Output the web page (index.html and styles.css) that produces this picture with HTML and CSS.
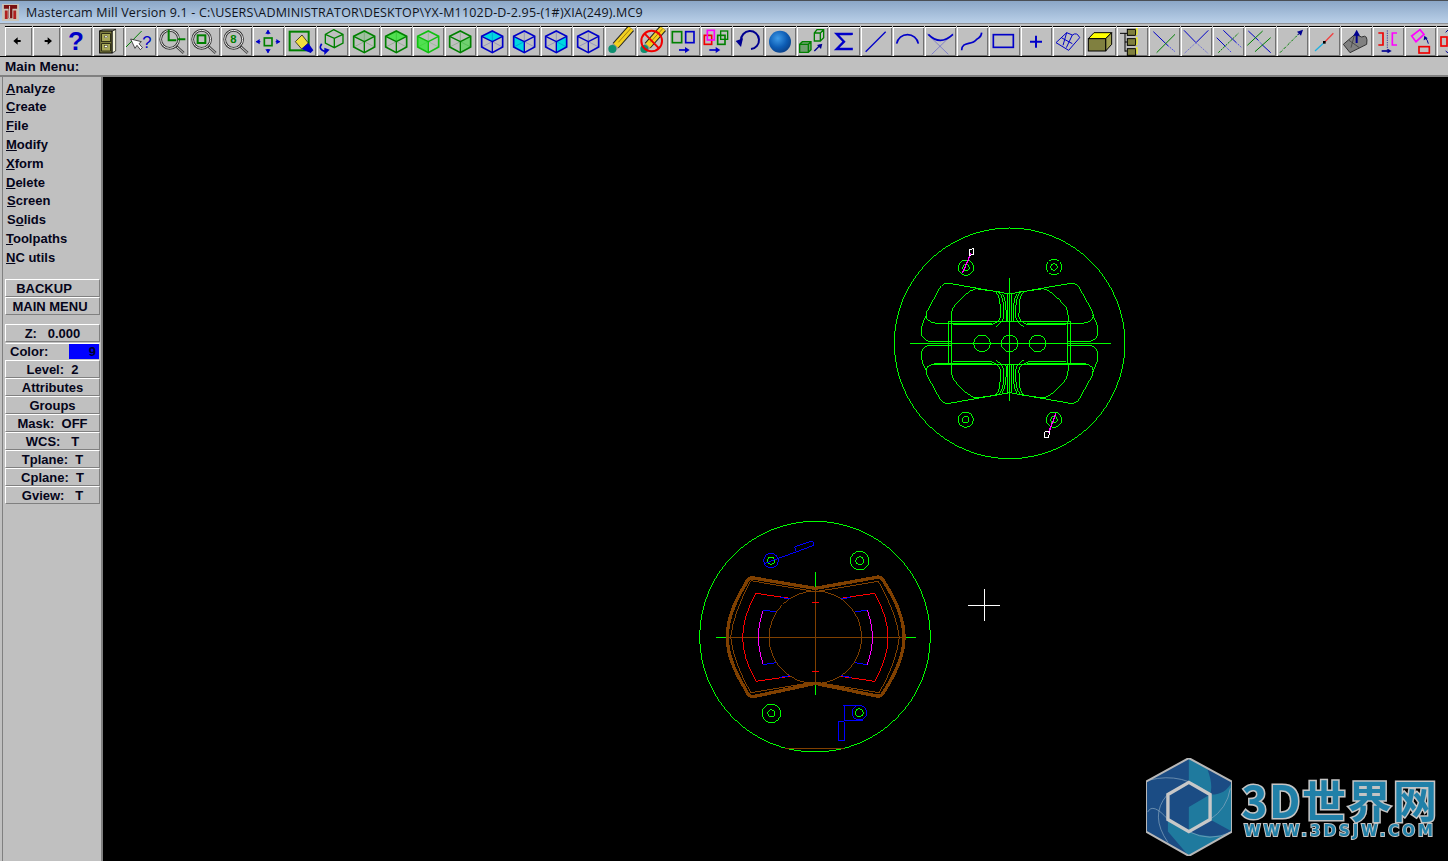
FILE: index.html
```html
<!DOCTYPE html>
<html lang="en">
<head>
<meta charset="utf-8">
<title>Mastercam Mill Version 9.1</title>
<link rel="stylesheet" href="styles.css">
</head>
<body>
<svg class="defs" width="0" height="0" aria-hidden="true">
  <defs>
    <radialGradient id="ball" cx="40%" cy="35%" r="70%"><stop offset="0" stop-color="#3f9be8"/><stop offset=".6" stop-color="#0d5cb4"/><stop offset="1" stop-color="#0a3f86"/></radialGradient>
    <g id="mag"><path d="M58 58L80 78" stroke="#444" stroke-width="8"/><path d="M58 58L80 78" stroke="#ddd" stroke-width="3"/><circle cx="38" cy="37" r="27" fill="none" stroke="#333" stroke-width="8"/><circle cx="38" cy="37" r="27" fill="none" stroke="#e8e8e8" stroke-width="3"/></g>
    <g id="cubeg"><path d="M46 44V77M46 44L14 28M46 44L77 28" fill="none" stroke-width="4"/><path d="M46 12L77 28V60L46 77L14 60V28Z" fill="none" stroke-width="5"/><path d="M46 12V44M14 60L46 44L77 60" fill="none" stroke-width="2" opacity=".35"/></g>
    <g id="pencil"><path d="M32 56L78 4" stroke="#222" stroke-width="24"/><path d="M32 56L78 4" stroke="#f2d020" stroke-width="18"/><path d="M40 46L78 4" stroke="#a08010" stroke-width="3"/><path d="M18 71L32 56" stroke="#999" stroke-width="22"/><circle cx="22" cy="66" r="12" fill="#0d9070"/></g>
    <g id="holeT"><circle r="23" fill="none" stroke-width="3"/><circle r="10" fill="none" stroke-width="3"/></g>
    <g id="quadT" fill="none" stroke="#00ff00" stroke-width="3">
      <path d="M374 222L192 190Q175 188 165 203L125 276Q115 305 155 310H322"/>
      <path d="M345 216L272 206Q245 213 205 262Q195 285 200 316"/>
      <path d="M332 216Q348 225 346 290Q345 304 320 314H205"/>
      <path d="M343 218Q358 232 356 290Q354 306 332 320"/>
      <path d="M352 222Q366 240 363 305"/>
      <path d="M368 222V305"/>
      <path d="M125 285Q105 320 110 345Q118 363 135 364H200"/>
      <path d="M190 305H374M190 305V370M200 316V370"/>
    </g>
    <g id="quadB" fill="none">
      <path d="M300 265L198 250Q158 320 158 382" stroke="#ff0000" stroke-width="3"/>
      <path d="M270 262L300 267" stroke="#0000ff" stroke-width="3"/>
      <path d="M220 300Q205 345 205 382" stroke="#ff00ff" stroke-width="3"/>
      <path d="M220 300L258 306" stroke="#0000ff" stroke-width="3"/>
    </g>
  </defs>
</svg>
<div class="app">
  <header class="titlebar">
    <svg class="app-icon" viewBox="0 0 18 18"><rect width="18" height="18" fill="#c9c4b8"/><path d="M2 1H16V5H11V15H7V5H2Z" fill="#7a1010"/><path d="M6 7H3V16H6ZM12 7H15V16H12Z" fill="#b02020"/><path d="M8 2V15" stroke="#ddd" stroke-width="1"/></svg>
    <span class="title-text">Mastercam Mill Version 9.1 - C:\USERS\ADMINISTRATOR\DESKTOP\YX-M1102D-D-2.95-(1#)XIA(249).MC9</span>
  </header>

  <nav class="toolbar">
    <button class="tool tool-sm"><svg viewBox="0 0 81 87"><path d="M25 42L38 31V39H47V45H38V53Z" fill="#000"/></svg></button>
    <button class="tool tool-sm"><svg viewBox="0 0 81 87"><path d="M57 42L44 31V39H35V45H44V53Z" fill="#000"/></svg></button>
    <button class="tool"><svg viewBox="0 0 93 87"><text class="glyph" x="45" y="68" font-size="78" text-anchor="middle" fill="#0000c8">?</text></svg></button>
    <button class="tool"><svg viewBox="0 0 93 87"><path d="M57 12L68 7V72L57 78Z" fill="#f4f4d8" stroke="#000" stroke-width="2"/><path d="M20 12L32 7H68L57 12Z" fill="#f4f4d8" stroke="#000" stroke-width="2"/><rect x="20" y="12" width="37" height="66" fill="#808040" stroke="#000" stroke-width="3"/><rect x="26" y="20" width="26" height="24" fill="#a8a858" stroke="#000" stroke-width="2"/><rect x="26" y="50" width="26" height="22" fill="#a8a858" stroke="#000" stroke-width="2"/><rect x="35" y="27" width="8" height="5" fill="#fff" stroke="#000"/><rect x="35" y="56" width="8" height="5" fill="#fff" stroke="#000"/></svg></button>
    <button class="tool"><svg viewBox="0 0 93 87"><path d="M3 60L50 12" stroke="#008000" stroke-width="3"/><path d="M17 36L30 64L36 55L46 68L52 62L42 50L49 44Z" fill="#fff" stroke="#000" stroke-width="2"/><text x="66" y="62" font-size="50" font-family="Liberation Sans" text-anchor="middle" fill="#0000c8">?</text></svg></button>
    <button class="tool"><svg viewBox="0 0 93 87"><use href="#mag"/><path d="M35 8V40H58M62 37H85" fill="none" stroke="#008000" stroke-width="6"/></svg></button>
    <button class="tool"><svg viewBox="0 0 93 87"><use href="#mag"/><rect x="26" y="25" width="23" height="23" fill="none" stroke="#008000" stroke-width="6"/></svg></button>
    <button class="tool"><svg viewBox="0 0 93 87"><use href="#mag"/><text class="glyph" x="37" y="49" font-size="34" text-anchor="middle" fill="#008000">8</text></svg></button>
    <button class="tool"><svg viewBox="0 0 93 87"><rect x="34" y="33" width="23" height="23" fill="none" stroke="#008000" stroke-width="5"/><path d="M22 44H10M68 44H80M45 22V10M45 66V77" stroke="#0000c8" stroke-width="4"/><path d="M8 44L20 36V52ZM82 44L70 36V52ZM45 8L37 20H53ZM45 79L37 67H53Z" fill="#0000c8"/></svg></button>
    <button class="tool"><svg viewBox="0 0 93 87"><rect x="14" y="14" width="57" height="56" fill="none" stroke="#008000" stroke-width="6"/><path d="M31 44L51 24L70 48L50 66Z" fill="#f0e040" stroke="#000" stroke-width="2"/><path d="M50 66L70 48L85 70L77 78Z" fill="#0000c8"/></svg></button>
    <button class="tool"><svg viewBox="0 0 93 87"><path d="M50 8L78 22V48L52 62L25 48V22ZM25 22L52 34L78 22M52 34V62" fill="none" stroke="#008000" stroke-width="4"/><path d="M14 50Q2 68 26 74" fill="none" stroke="#0000c8" stroke-width="5"/><path d="M38 68L22 62V84Z" fill="#0000c8"/></svg></button>
    <button class="tool"><svg viewBox="0 0 93 87"><path d="M46 12L77 28L46 44L14 28Z" fill="#80c080" opacity=".5"/><use href="#cubeg" stroke="#008000"/></svg></button>
    <button class="tool"><svg viewBox="0 0 93 87"><path d="M46 12L77 28L46 44L14 28Z" fill="#50e050"/><use href="#cubeg" stroke="#008000"/></svg></button>
    <button class="tool"><svg viewBox="0 0 93 87"><path d="M46 44V77L14 60V28Z" fill="#50e050"/><use href="#cubeg" stroke="#10c010"/></svg></button>
    <button class="tool"><svg viewBox="0 0 93 87"><path d="M46 44V77L77 60V28Z" fill="#70d070"/><use href="#cubeg" stroke="#008000"/></svg></button>
    <button class="tool"><svg viewBox="0 0 93 87"><path d="M46 12L77 28L46 44L14 28Z" fill="#00d8e0"/><use href="#cubeg" stroke="#0000c8"/></svg></button>
    <button class="tool"><svg viewBox="0 0 93 87"><path d="M46 44V77L14 60V28Z" fill="#00d8e0"/><use href="#cubeg" stroke="#0000c8"/></svg></button>
    <button class="tool"><svg viewBox="0 0 93 87"><path d="M46 44V77L77 60V28Z" fill="#00d8e0"/><use href="#cubeg" stroke="#0000c8"/></svg></button>
    <button class="tool"><svg viewBox="0 0 93 87"><use href="#cubeg" stroke="#0000c8"/></svg></button>
    <button class="tool"><svg viewBox="0 0 93 87"><use href="#pencil"/></svg></button>
    <button class="tool"><svg viewBox="0 0 93 87"><use href="#pencil"/><circle cx="44" cy="42" r="31" fill="none" stroke="#f00000" stroke-width="6"/><path d="M23 20L66 64" stroke="#f00000" stroke-width="6"/></svg></button>
    <button class="tool"><svg viewBox="0 0 93 87"><rect x="10" y="14" width="28" height="33" fill="none" stroke="#008000" stroke-width="5"/><rect x="50" y="14" width="25" height="33" fill="none" stroke="#0000c8" stroke-width="5"/><path d="M30 69H50" stroke="#0000c8" stroke-width="5"/><path d="M62 69L48 60V78Z" fill="#0000c8"/></svg></button>
    <button class="tool"><svg viewBox="0 0 93 87"><rect x="10" y="25" width="22" height="27" fill="none" stroke="#f00000" stroke-width="5"/><rect x="19" y="10" width="21" height="29" fill="none" stroke="#ff00ff" stroke-width="5"/><rect x="50" y="25" width="22" height="27" fill="none" stroke="#008000" stroke-width="5"/><rect x="59" y="12" width="21" height="25" fill="none" stroke="#008000" stroke-width="4"/><path d="M25 69H46" stroke="#0000c8" stroke-width="5"/><path d="M58 69L44 60V78Z" fill="#0000c8"/></svg></button>
    <button class="tool"><svg viewBox="0 0 93 87"><path d="M24 40A27 27 0 1 1 54 66" fill="none" stroke="#000090" stroke-width="6"/><path d="M8 42L30 34L24 60Z" fill="#000090"/></svg></button>
    <button class="tool"><svg viewBox="0 0 93 87"><circle cx="45" cy="44" r="33" fill="url(#ball)"/></svg></button>
    <button class="tool"><svg viewBox="0 0 93 87"><path d="M52 18L60 8H80V32L70 42H52ZM52 18H70V42M70 18L80 8" fill="none" stroke="#008000" stroke-width="4"/><path d="M8 52L16 44H42V68L34 76H8ZM8 52H34V76M34 52L42 44" fill="#70a070" stroke="#008000" stroke-width="4"/><path d="M52 72L70 54" stroke="#000090" stroke-width="4"/><path d="M76 50L60 54L72 66Z" fill="#000090"/></svg></button>
    <button class="tool"><svg viewBox="0 0 93 87"><path d="M68 24V21H23L45 44L23 66H68V62" fill="none" stroke="#0000c8" stroke-width="7"/></svg></button>
    <button class="tool"><svg viewBox="0 0 93 87"><path d="M14 74L74 14" stroke="#0000c8" stroke-width="4"/></svg></button>
    <button class="tool"><svg viewBox="0 0 93 87"><path d="M11 50A33 33 0 0 1 76 50" fill="none" stroke="#0000c8" stroke-width="5"/></svg></button>
    <button class="tool"><svg viewBox="0 0 93 87"><path d="M5 19L70 82M85 19L20 82" stroke="#4040d0" stroke-width="1.5"/><path d="M10 22Q45 58 84 22" fill="none" stroke="#0000c8" stroke-width="5"/></svg></button>
    <button class="tool"><svg viewBox="0 0 93 87"><path d="M14 70C14 42 44 56 58 38C66 30 72 34 74 17" fill="none" stroke="#0000c8" stroke-width="5"/></svg></button>
    <button class="tool"><svg viewBox="0 0 93 87"><rect x="13" y="23" width="60" height="38" fill="none" stroke="#0000c8" stroke-width="5"/></svg></button>
    <button class="tool"><svg viewBox="0 0 93 87"><path d="M45 26V62M27 44H63" stroke="#0000c8" stroke-width="6"/></svg></button>
    <button class="tool"><svg viewBox="0 0 93 87"><path d="M9 47L41 17L58 24Q72 14 80 32L47 70ZM25 32L58 50M41 17L30 55M58 24L40 62" fill="none" stroke="#0000c8" stroke-width="3"/></svg></button>
    <button class="tool"><svg viewBox="0 0 93 87"><path d="M10 35L27 17H80L62 35Z" fill="#ffff00" stroke="#000" stroke-width="3"/><path d="M62 35L80 17V52L62 72Z" fill="#a0a050" stroke="#000" stroke-width="3"/><rect x="10" y="35" width="52" height="37" fill="#808040" stroke="#000" stroke-width="3"/></svg></button>
    <button class="tool"><svg viewBox="0 0 93 87"><path d="M9 19H31M24 19V74M24 45H31M24 72H31" stroke="#000" stroke-width="3" fill="none"/><rect x="31" y="7" width="25" height="18" fill="#808040" stroke="#000" stroke-width="3"/><rect x="31" y="35" width="25" height="20" fill="#808040" stroke="#000" stroke-width="3"/><rect x="31" y="65" width="25" height="20" fill="#808040" stroke="#000" stroke-width="3"/><path d="M56 7L60 3V21L56 25M56 35L60 31V51L56 55M56 65L60 61V81" stroke="#ffff00" stroke-width="3" fill="none"/></svg></button>
    <button class="tool"><svg viewBox="0 0 93 87"><path d="M13 14L58 57" stroke="#0000c8" stroke-width="3"/><path d="M58 57L78 74" stroke="#4040f0" stroke-width="3" stroke-dasharray="4 3"/><path d="M23 77L78 22" stroke="#008000" stroke-width="3"/></svg></button>
    <button class="tool"><svg viewBox="0 0 93 87"><path d="M9 10L45 47L82 10" fill="none" stroke="#0000c8" stroke-width="3"/><path d="M45 47L9 80M45 47L82 80" stroke="#6868d8" stroke-width="3" stroke-dasharray="4 3"/></svg></button>
    <button class="tool"><svg viewBox="0 0 93 87"><path d="M31 10L70 47M11 32L36 57" stroke="#0000c8" stroke-width="3"/><path d="M70 47L86 62M36 57L56 77" stroke="#4040f0" stroke-width="3" stroke-dasharray="4 3"/><path d="M16 77L76 19" stroke="#008000" stroke-width="3" stroke-dasharray="7 3"/></svg></button>
    <button class="tool"><svg viewBox="0 0 93 87"><path d="M10 12L40 40M50 52L77 77" stroke="#0000c8" stroke-width="3"/><path d="M40 40L50 52" stroke="#4040f0" stroke-width="3" stroke-dasharray="3 3"/><path d="M7 55L53 12M30 74L77 32" stroke="#008000" stroke-width="3"/></svg></button>
    <button class="tool"><svg viewBox="0 0 93 87"><path d="M9 77L64 22" stroke="#008000" stroke-width="3" stroke-dasharray="8 3 2 3"/><path d="M62 24L74 12" stroke="#000090" stroke-width="3"/><path d="M78 8L60 14L72 26Z" fill="#000090"/></svg></button>
    <button class="tool"><svg viewBox="0 0 93 87"><path d="M73 19L48 44" stroke="#f04040" stroke-width="4"/><path d="M18 72L43 49" stroke="#20b0e0" stroke-width="4"/><rect x="42" y="42" width="8" height="8" fill="#000"/></svg></button>
    <button class="tool"><svg viewBox="0 0 93 87"><path d="M7 52L42 22L62 30Q82 20 77 52L27 77Z" fill="#808080" stroke="#333" stroke-width="3"/><path d="M24 40L55 62M40 25L30 62" stroke="#333" stroke-width="2"/><path d="M47 48V20" stroke="#000090" stroke-width="6"/><path d="M47 8L37 26H57Z" fill="#000090"/></svg></button>
    <button class="tool"><svg viewBox="0 0 93 87"><path d="M16 18H30V54H16" fill="none" stroke="#f00000" stroke-width="5"/><path d="M72 18H58V54H72" fill="none" stroke="#ff00ff" stroke-width="5"/><path d="M43 10V80" stroke="#000090" stroke-width="2" stroke-dasharray="4 3"/><path d="M26 72H46" stroke="#000090" stroke-width="5"/><path d="M56 72L44 65V79Z" fill="#000090"/></svg></button>
    <button class="tool"><svg viewBox="0 0 93 87"><path d="M20 27L45 8L57 22L33 44Z" fill="none" stroke="#ff00ff" stroke-width="5"/><rect x="42" y="59" width="31" height="19" fill="none" stroke="#f00000" stroke-width="5"/><path d="M70 50Q68 38 60 32" fill="none" stroke="#000090" stroke-width="3"/><path d="M58 26L56 40L68 34Z" fill="#000090"/></svg></button>
    <button class="tool"><svg viewBox="0 0 93 87"><rect x="12" y="30" width="18" height="27" fill="none" stroke="#f00000" stroke-width="5"/><path d="M26 16L36 6M26 72L36 80" stroke="#000090" stroke-width="3"/></svg></button>
  </nav>

  <div class="menu-title">Main Menu:</div>

  <div class="workspace">
    <aside class="sidebar">
      <ul class="menu">
        <li><u>A</u>nalyze</li>
        <li><u>C</u>reate</li>
        <li><u>F</u>ile</li>
        <li><u>M</u>odify</li>
        <li><u>X</u>form</li>
        <li><u>D</u>elete</li>
        <li class="nudge"><u>S</u>creen</li>
        <li class="nudge">S<u>o</u>lids</li>
        <li><u>T</u>oolpaths</li>
        <li><u>N</u>C utils</li>
      </ul>
      <div class="btn-group nav-group">
        <div class="side-btn backup">BACKUP</div>
        <div class="side-btn main-btn">MAIN MENU</div>
      </div>
      <div class="btn-group">
        <div class="side-btn">Z:   0.000</div>
        <div class="side-btn color-row"><span>Color:</span><span class="swatch">9</span></div>
        <div class="side-btn">Level:  2</div>
        <div class="side-btn">Attributes</div>
        <div class="side-btn">Groups</div>
        <div class="side-btn">Mask:  OFF</div>
        <div class="side-btn">WCS:   T</div>
        <div class="side-btn">Tplane:  T</div>
        <div class="side-btn">Cplane:  T</div>
        <div class="side-btn">Gview:   T</div>
      </div>
    </aside>

    <main class="canvas">
      <svg class="drawing" viewBox="103 77 1345 784" shape-rendering="crispEdges">
        <g transform="translate(885 220) scale(.33333)" fill="none">
          <circle cx="374" cy="370" r="346" stroke="#00ff00" stroke-width="3"/>
          <use href="#holeT" x="243" y="143" stroke="#00ff00"/>
          <use href="#holeT" x="507" y="141" stroke="#00ff00"/>
          <use href="#holeT" x="242" y="599" stroke="#00ff00"/>
          <use href="#holeT" x="507" y="599" stroke="#00ff00"/>
          <use href="#quadT"/>
          <use href="#quadT" transform="translate(748 0) scale(-1 1)"/>
          <use href="#quadT" transform="translate(0 740) scale(1 -1)"/>
          <use href="#quadT" transform="translate(748 740) scale(-1 -1)"/>
          <path d="M75 370H678M373 175V543" stroke="#00ff00" stroke-width="3"/>
          <path d="M143 434H605" stroke="#00ff00" stroke-width="3"/>
          <g stroke="#00ff00" stroke-width="3"><circle cx="291" cy="370" r="25"/><circle cx="374" cy="370" r="25"/><circle cx="458" cy="370" r="25"/></g>
          <path d="M232 160L258 100M490 640L513 580" stroke="#ff00ff" stroke-width="4"/>
          <path d="M255 88L267 86L265 104L253 106ZM480 636L493 634L491 654L478 654Z" stroke="#ffffff" stroke-width="3"/>
        </g>
        <g transform="translate(690 510) scale(.33333)" fill="none">
          <circle cx="375" cy="380" r="346" stroke="#00ff00" stroke-width="3"/>
          <path d="M78 382H678M376 185V555" stroke="#00ff00" stroke-width="3"/>
          <path d="M376 235L560 202Q575 198 585 220Q642 310 642 382Q642 450 585 540Q575 562 560 558L376 520L190 560Q175 562 165 535Q112 450 112 382Q112 310 165 225Q175 200 190 204Z" stroke="#804000" stroke-width="10"/>
          <path d="M376 245L565 214Q620 310 628 382Q620 455 568 548L376 516L182 548Q130 455 122 382Q130 310 182 212Z" stroke="#804000" stroke-width="3"/>
          <circle cx="376" cy="382" r="139" stroke="#804000" stroke-width="3"/>
          <path d="M110 382H640M376 235V525" stroke="#804000" stroke-width="3"/>
          <path d="M365 277H388M365 484H388" stroke="#ff0000" stroke-width="3"/>
          <use href="#quadB"/>
          <use href="#quadB" transform="translate(752 0) scale(-1 1)"/>
          <use href="#quadB" transform="translate(0 764) scale(1 -1)"/>
          <use href="#quadB" transform="translate(752 764) scale(-1 -1)"/>
          <circle cx="243" cy="152" r="22" stroke="#0000ff" stroke-width="3"/>
          <circle cx="243" cy="152" r="11" stroke="#00ff00" stroke-width="3"/>
          <path d="M225 160L372 106L368 93L314 110L317 124" stroke="#0000ff" stroke-width="3"/>
          <circle cx="509" cy="152" r="28" stroke="#00ff00" stroke-width="3"/>
          <circle cx="509" cy="152" r="12" stroke="#00ff00" stroke-width="3"/>
          <circle cx="244" cy="610" r="28" stroke="#00ff00" stroke-width="3"/>
          <circle cx="244" cy="610" r="11" stroke="#00ff00" stroke-width="3"/>
          <circle cx="508" cy="608" r="22" stroke="#0000ff" stroke-width="3"/>
          <circle cx="508" cy="608" r="12" stroke="#00ff00" stroke-width="3"/>
          <path d="M458 587H510M463 587V632H520M445 636H463V692H445Z" stroke="#0000ff" stroke-width="3"/>
          <path d="M285 716H462" stroke="#804000" stroke-width="3"/>
        </g>
        <path d="M968 605.5H1000M984.5 589V621" stroke="#ffffff" fill="none"/>
      </svg>
      <div class="logo">
        <svg class="logo-mark" viewBox="50 40 255 290">
          <path d="M177 40L305 110V258L177 330L50 258V110Z" fill="#1b4c84"/>
          <path d="M177 40L232 72Q250 120 240 148L177 112ZM305 110V258L240 222V148Q285 150 305 110ZM305 258L177 330L115 258V222L177 258Q250 285 305 258Z" fill="#1f7a9e"/>
          <path d="M60 105Q160 80 240 148M115 222Q70 170 55 200M112 150Q60 210 115 290M240 222Q290 190 300 130M177 258Q240 290 300 260" fill="none" stroke="#8aa8c0" stroke-width="2"/>
          <path d="M177 40L305 110V258L177 330L50 258V110Z" fill="none" stroke="#b8b8b8" stroke-width="6"/>
          <path d="M177 112L240 148L177 185L115 148ZM115 148L177 185V258L115 222Z" fill="#1b4c84"/>
          <path d="M240 148V222L177 258V185Z" fill="#1f7a9e"/>
          <path d="M177 112L240 148V222L177 258L115 222V148Z" fill="none" stroke="#c8c8c8" stroke-width="10"/>
        </svg>
        <div class="logo-text">
          <div class="logo-name">3D世界网</div>
          <div class="logo-url">WWW.3DSJW.COM</div>
        </div>
      </div>
    </main>
  </div>
</div>
</body>
</html>
```
FILE: styles.css
```css
* { box-sizing: border-box; }
html, body { margin: 0; height: 100%; overflow: hidden; background: #000; }
body { font-family: "Liberation Sans", Arial, sans-serif; }
.defs { position: absolute; }
.app { display: flex; flex-direction: column; width: 1448px; height: 861px; background: #c0c0c0; }

.titlebar {
  flex: 0 0 23px; display: flex; align-items: center; gap: 7px; padding-left: 2px;
  background: linear-gradient(#8ba7c7, #bad0e8);
  border-top: 1px solid #4a4f55;
}
.app-icon { width: 17px; height: 17px; flex: none; }
.title-text { font-family: "Open Sans", sans-serif; font-size: 12.5px; letter-spacing: .18px; color: #10141c; white-space: nowrap; }

.toolbar {
  flex: 0 0 34px; display: flex; gap: 1px; padding: 3px 0 1px 5px;
  background: #c0c0c0; border-top: 1px solid #8d9094; border-bottom: 1px solid #000; overflow: hidden;
}
.tool {
  flex: 0 0 31px; height: 29px; padding: 0; border: 0; background: #c0c0c0; display: block;
  box-shadow: inset 1px 1px 0 #fff, inset -1px -1px 0 #707070;
  outline: 1px solid #000; outline-offset: 0;
  clip-path: inset(-1px 0 -1px 0);
}
.tool-sm { flex-basis: 27px; }
.tool svg { display: block; width: 100%; height: 100%; }
.glyph { font-family: "Liberation Sans", sans-serif; font-weight: bold; }

.menu-title {
  flex: 0 0 20px; padding: 2px 0 0 5px; font-size: 13.5px; font-weight: bold; color: #05051a;
  border-bottom: 2px solid #808080; line-height: 16px;
}

.workspace { flex: 1; display: flex; min-height: 0; }
.sidebar {
  flex: 0 0 101px; margin-left: 2px; padding: 2.4px 1px 0 1px; font-size: 13px; font-weight: bold; color: #05051a;
  border-left: 1px solid #808080; border-right: 2px solid #808080;
}
.menu { list-style: none; margin: 0; padding: 0 0 0 2px; }
.menu li { height: 18.85px; line-height: 18px; }
.menu li:first-child { line-height: 19px; }
.menu .nudge { padding-left: 1px; }

.btn-group { margin-left: 1px; }
.nav-group { margin-top: 11.6px; margin-bottom: 9px; }
.side-btn {
  height: 18px; line-height: 17px; text-align: center; white-space: pre; background: #c0c0c0;
  border: 1px solid; border-color: #fff #808080 #808080 #fff;
}
.backup { padding-right: 17px; }
.main-btn { padding-right: 5px; }
.color-row { display: flex; justify-content: space-between; align-items: stretch; margin-top: 1px; padding-left: 4px; line-height: 16px; height: 17px; border-color: #fff #c0c0c0 #c0c0c0 #c0c0c0; }
.swatch { width: 30px; background: #0000ff; text-align: right; padding-right: 3px; color: #000030; }

.canvas { flex: 1; position: relative; background: #000; overflow: hidden; }
.drawing { display: block; width: 1345px; height: 784px; }

.logo { position: absolute; right: 7px; bottom: 5px; display: flex; align-items: center; gap: 7px; filter: blur(.4px); }
.logo-mark { width: 86px; height: 98px; display: block; }
.logo-text { display: flex; flex-direction: column; align-items: center; width: 202px; }
.logo-name {
  font-family: "Noto Sans CJK SC", "Liberation Sans", sans-serif; font-weight: 700; font-size: 44px; line-height: 47px; letter-spacing: 1.5px;
  color: #2180a8; -webkit-text-stroke: 3px #c4c4c4; paint-order: stroke fill; white-space: nowrap;
}
.logo-url {
  font-family: "DejaVu Sans", sans-serif; font-weight: 700; font-size: 15px; line-height: 16px; letter-spacing: 3px;
  color: #2180a8; -webkit-text-stroke: 2px #c4c4c4; paint-order: stroke fill; white-space: nowrap;
}
```
